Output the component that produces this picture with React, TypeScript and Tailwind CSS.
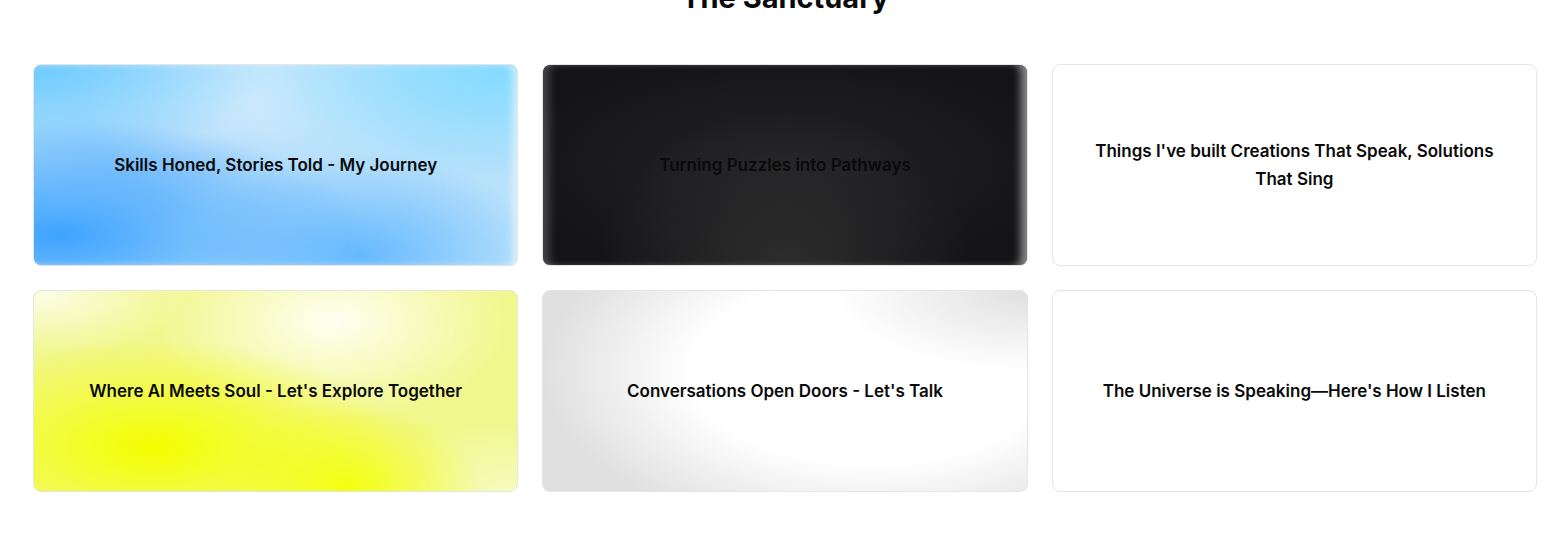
import React from "react";

const cards = [
  {
    title: "Skills Honed, Stories Told - My Journey",
    bg: "bg-[#b8e1fb] bg-[radial-gradient(ellipse_at_5%_85%,#3ea3ff_0%,transparent_48%),radial-gradient(ellipse_at_68%_95%,#67b9ff_0%,transparent_38%),radial-gradient(ellipse_at_97%_3%,#84dbff_0%,transparent_40%),radial-gradient(ellipse_at_0%_0%,#6ccbff_0%,transparent_35%),radial-gradient(ellipse_at_47%_15%,#cdeafc_0%,transparent_50%),radial-gradient(ellipse_at_25%_50%,#8fc9fb_0%,transparent_45%)] shadow-[inset_-6px_0_8px_-2px_rgba(255,255,255,0.6)]",
  },
  {
    title: "Turning Puzzles into Pathways",
    bg: "bg-[radial-gradient(ellipse_at_50%_100%,#2d2d2d_0%,transparent_55%),radial-gradient(ellipse_at_50%_50%,#232326_0%,#141417_85%)] shadow-[inset_-10px_0_8px_-4px_rgba(170,170,170,0.8),inset_10px_0_8px_-4px_rgba(120,120,120,0.5)]",
  },
  {
    title: "Things I've built Creations That Speak, Solutions That Sing",
    bg: "bg-white",
  },
  {
    title: "Where AI Meets Soul - Let's Explore Together",
    bg: "bg-[#f1f78c] bg-[radial-gradient(ellipse_at_25%_78%,#f4ff00_0%,transparent_48%),radial-gradient(ellipse_at_65%_98%,#f4ff14_0%,transparent_30%),radial-gradient(ellipse_at_62%_15%,#fefff2_0%,transparent_42%),radial-gradient(ellipse_at_2%_2%,#fbfde4_0%,transparent_22%),radial-gradient(ellipse_at_100%_100%,#f6fbbd_0%,transparent_25%)]",
  },
  {
    title: "Conversations Open Doors - Let's Talk",
    bg: "bg-[#e0e0e0] bg-[radial-gradient(ellipse_at_100%_0%,#e0e0e0_0%,transparent_28%),radial-gradient(ellipse_68%_85%_at_68%_40%,#ffffff_55%,transparent_100%)]",
  },
  {
    title: "The Universe is Speaking—Here's How I Listen",
    bg: "bg-white",
  },
];

export default function App() {
  return (
    <div className="min-h-screen bg-white font-['Inter',sans-serif] text-black">
      <div className="pl-[33px] pr-[29px]">
        {/* Section heading, scrolled partly out of view */}
        <h2 className="-mt-[20px] mb-12 text-center text-[29px] font-bold leading-9 text-[#0a0a0a]">
          The Sanctuary
        </h2>

        <div className="grid grid-cols-3 gap-6">
          {cards.map((card) => (
            <div
              key={card.title}
              className={`flex h-[202px] items-center justify-center rounded-lg border border-[#e5e5e5] px-9 text-center ${card.bg}`}
            >
              <h3 className="text-[17px] font-semibold leading-7 text-[#0a0a0a]">
                {card.title}
              </h3>
            </div>
          ))}
        </div>
      </div>
    </div>
  );
}
